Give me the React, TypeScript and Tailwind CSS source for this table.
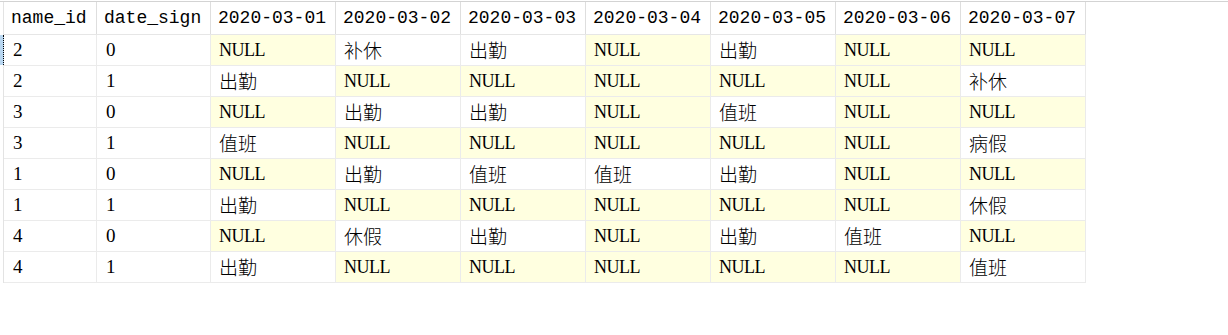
import React from "react";

const headers = ["name_id", "date_sign", "2020-03-01", "2020-03-02", "2020-03-03", "2020-03-04", "2020-03-05", "2020-03-06", "2020-03-07"];

const rows: string[][] = [
  ["2", "0", "NULL", "补休", "出勤", "NULL", "出勤", "NULL", "NULL"],
  ["2", "1", "出勤", "NULL", "NULL", "NULL", "NULL", "NULL", "补休"],
  ["3", "0", "NULL", "出勤", "出勤", "NULL", "值班", "NULL", "NULL"],
  ["3", "1", "值班", "NULL", "NULL", "NULL", "NULL", "NULL", "病假"],
  ["1", "0", "NULL", "出勤", "值班", "值班", "出勤", "NULL", "NULL"],
  ["1", "1", "出勤", "NULL", "NULL", "NULL", "NULL", "NULL", "休假"],
  ["4", "0", "NULL", "休假", "出勤", "NULL", "出勤", "值班", "NULL"],
  ["4", "1", "出勤", "NULL", "NULL", "NULL", "NULL", "NULL", "值班"],
];

const widths = ["w-[93px]", "w-[114px]", "w-[125px]", "w-[125px]", "w-[125px]", "w-[125px]", "w-[125px]", "w-[125px]", "w-[125px]"];

export default function App() {
  return (
    <div className="w-[1228px] h-[335px] bg-white overflow-hidden">
      <div className="h-px mt-px bg-[#d3d3d3]" />
      <div className="ml-[3px] flex flex-col w-max border-l border-[#e3e3e3]">
        <div className="flex h-[33px] border-b border-[#e6e6e6]">
          {headers.map((h, i) => (
            <div
              key={i}
              className={`${widths[i]} h-full border-r border-[#dedede] pl-[7px] flex items-center text-[18px] text-black`}
              style={{ fontFamily: '"Liberation Mono", monospace' }}
            >
              {h}
            </div>
          ))}
        </div>
        {rows.map((r, ri) => (
          <div key={ri} className="flex h-[31px] border-b border-[#ebebeb]">
            {r.map((c, ci) => {
              const isNull = c === "NULL";
              const isCjk = /[\u4e00-\u9fff]/.test(c);
              return (
                <div
                  key={ci}
                  className={`${widths[ci]} relative h-full border-r border-[#ebebeb] ${ci < 2 ? "pl-[9px]" : "pl-[8px]"} flex items-center text-black ${isNull ? "bg-[#ffffe0]" : "bg-white"} ${isCjk ? "text-[19px] font-light" : isNull ? "text-[18px] tracking-[-0.5px]" : "text-[19px]"}`}
                  style={{ fontFamily: isCjk ? '"Noto Sans CJK SC", sans-serif' : '"Liberation Serif", serif' }}
                >
                  {ri === 0 && ci === 0 && (
                    <div className="absolute -left-[4px] top-0 bottom-0 w-[4px] bg-[#b8d6f0] border-r border-dotted border-black" />
                  )}
                  {c}
                </div>
              );
            })}
          </div>
        ))}
      </div>
    </div>
  );
}
